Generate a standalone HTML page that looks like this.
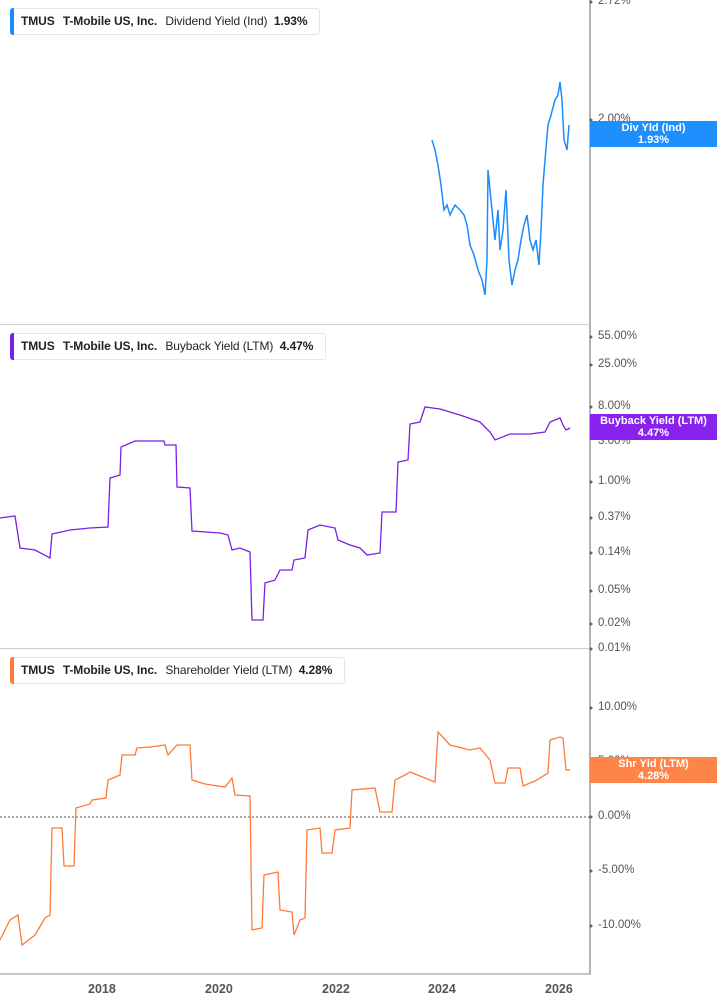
<!DOCTYPE html>
<html><head><meta charset="utf-8"><style>
body{margin:0;background:#fff;width:717px;height:1005px;overflow:hidden;font-family:"Liberation Sans",sans-serif;position:relative}
.leg{position:absolute;left:10px;height:25px;border:1px solid #e6e6e6;border-radius:3px;background:#fff;font-size:12px;color:#222;line-height:25px;padding-left:10px;padding-right:7px;white-space:nowrap;letter-spacing:-0.1px}
.leg::before{content:"";position:absolute;left:-1px;top:-1px;bottom:-1px;width:4px;border-radius:3px 0 0 3px;background:var(--c)}
.leg b{margin-right:5px}
.yl{position:absolute;left:598px;font-size:11.5px;color:#555}
.badge{position:absolute;left:590px;width:127px;height:26px;color:#fff;font-size:11px;font-weight:bold;text-align:center;line-height:12px;padding-top:1px;box-sizing:border-box}
.xl{position:absolute;top:982px;font-size:12.5px;font-weight:bold;color:#555}
</style></head><body>
<svg width="717" height="1005" style="position:absolute;left:0;top:0">
<line x1="590" y1="0" x2="590" y2="974" stroke="#b3b3b3" stroke-width="2"/>
<line x1="0" y1="974" x2="591" y2="974" stroke="#b3b3b3" stroke-width="1.5"/>
<line x1="0" y1="324.5" x2="590" y2="324.5" stroke="#ccc"/>
<line x1="0" y1="648.5" x2="590" y2="648.5" stroke="#ccc"/>
<line x1="0" y1="817" x2="590" y2="817" stroke="#555" stroke-dasharray="2,2"/>
<polyline fill="none" stroke="#1a8cff" stroke-width="1.5" points="432,140 435,150 438,165 441,185 444,210 447,205 450,215 455,205 460,210 464,215 467,225 470,245 474,255 478,270 482,280 485,295 487,260 488,170 490,190 492,210 495,240 498,210 500,250 503,230 506,190 509,260 512,285 515,270 518,260 521,240 524,225 527,215 530,240 533,250 536,240 539,265 541,230 543,185 545,160 548,125 551,115 555,100 558,95 560,82 562,100 564,140 567,150 569,125"/>
<polyline fill="none" stroke="#7a1fe6" stroke-width="1.3" points="0,518 15,516 20,548 35,550 50,558 52,534 70,530 90,528 108,527 110,478 120,475 121,447 135,441 164,441 165,445 176,445 177,487 190,488 192,531 220,533 228,535 232,550 240,548 250,552 252,620 263,620 265,583 275,580 280,570 292,570 294,560 305,558 308,530 320,525 335,528 338,540 350,545 360,548 367,555 380,553 382,512 396,512 398,462 408,460 410,424 420,422 425,407 440,409 460,415 480,422 490,432 495,440 510,434 530,434 545,432 550,422 560,418 563,425 566,430 570,428"/>
<polyline fill="none" stroke="#ff7a38" stroke-width="1.3" points="0,940 10,920 18,915 22,945 35,935 45,918 50,915 52,828 62,828 64,866 74,866 76,808 90,804 92,800 106,798 108,780 120,775 122,755 135,755 137,748 150,747 165,745 168,755 177,745 190,745 192,780 205,784 225,787 232,778 235,795 250,796 252,930 262,928 264,875 278,872 280,910 292,912 294,935 300,920 305,918 307,830 320,828 322,853 332,853 335,830 350,828 352,790 375,788 380,812 392,812 395,780 405,775 410,772 425,778 435,782 438,732 450,745 470,750 480,748 490,760 495,783 505,783 508,768 520,768 523,786 535,781 548,773 550,740 560,737 563,738 566,770 570,770"/>
<g fill="#666">
<circle cx="591" cy="2" r="1.5"/><circle cx="591" cy="120" r="1.5"/>
<circle cx="591" cy="337" r="1.5"/><circle cx="591" cy="365" r="1.5"/><circle cx="591" cy="407" r="1.5"/><circle cx="591" cy="482" r="1.5"/><circle cx="591" cy="518" r="1.5"/><circle cx="591" cy="553" r="1.5"/><circle cx="591" cy="591" r="1.5"/><circle cx="591" cy="624" r="1.5"/><circle cx="591" cy="649" r="1.5"/>
<circle cx="591" cy="708" r="1.5"/><circle cx="591" cy="817" r="1.5"/><circle cx="591" cy="871" r="1.5"/><circle cx="591" cy="926" r="1.5"/>
</g>
</svg>
<div class="leg" style="top:8px;--c:#1a8cff"><b>TMUS</b> <b>T-Mobile US, Inc.</b> Dividend Yield (Ind) &nbsp;<b>1.93%</b></div>
<div class="leg" style="top:333px;--c:#7a1fe6"><b>TMUS</b> <b>T-Mobile US, Inc.</b> Buyback Yield (LTM) &nbsp;<b>4.47%</b></div>
<div class="leg" style="top:657px;--c:#ff7a38"><b>TMUS</b> <b>T-Mobile US, Inc.</b> Shareholder Yield (LTM) &nbsp;<b>4.28%</b></div>
<div class="yl" style="top:-5px">2.72%</div>
<div class="yl" style="top:113px">2.00%</div>
<div class="yl" style="top:330px">55.00%</div>
<div class="yl" style="top:358px">25.00%</div>
<div class="yl" style="top:400px">8.00%</div>
<div class="yl" style="top:435px">3.00%</div>
<div class="yl" style="top:475px">1.00%</div>
<div class="yl" style="top:511px">0.37%</div>
<div class="yl" style="top:546px">0.14%</div>
<div class="yl" style="top:584px">0.05%</div>
<div class="yl" style="top:617px">0.02%</div>
<div class="yl" style="top:642px">0.01%</div>
<div class="yl" style="top:701px">10.00%</div>
<div class="yl" style="top:755px">5.00%</div>
<div class="yl" style="top:810px">0.00%</div>
<div class="yl" style="top:864px">-5.00%</div>
<div class="yl" style="top:919px">-10.00%</div>
<div class="badge" style="top:121px;background:#1e8fff">Div Yld (Ind)<br>1.93%</div>
<div class="badge" style="top:414px;background:#8a22ee">Buyback Yield (LTM)<br>4.47%</div>
<div class="badge" style="top:757px;background:#ff8447">Shr Yld (LTM)<br>4.28%</div>
<div class="xl" style="left:88px">2018</div>
<div class="xl" style="left:205px">2020</div>
<div class="xl" style="left:322px">2022</div>
<div class="xl" style="left:428px">2024</div>
<div class="xl" style="left:545px">2026</div>
</body></html>
